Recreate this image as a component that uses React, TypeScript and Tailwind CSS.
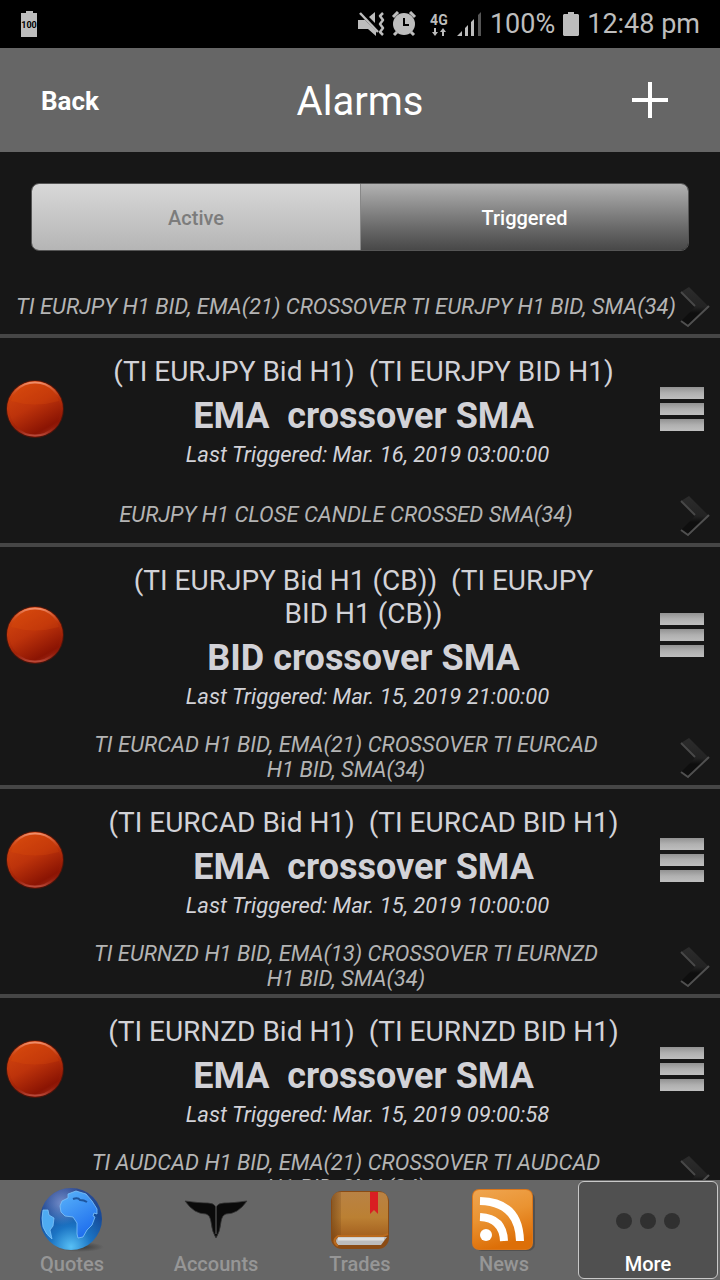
import type { ReactNode } from "react";

type Alarm = {
  id: number;
  terms?: string;
  rule?: string;
  date?: string;
  note: string;
};

const ALARMS: Alarm[] = [
  { id: 1, note: "TI EURJPY H1 BID, EMA(21) CROSSOVER TI EURJPY H1 BID, SMA(34)" },
  { id: 2, terms: "(TI EURJPY Bid H1)  (TI EURJPY BID H1)", rule: "EMA  crossover SMA", date: "Mar. 16, 2019 03:00:00", note: "EURJPY H1 CLOSE CANDLE CROSSED SMA(34)" },
  { id: 3, terms: "(TI EURJPY Bid H1 (CB))  (TI EURJPY\nBID H1 (CB))", rule: "BID crossover SMA", date: "Mar. 15, 2019 21:00:00", note: "TI EURCAD H1 BID, EMA(21) CROSSOVER TI EURCAD\nH1 BID, SMA(34)" },
  { id: 4, terms: "(TI EURCAD Bid H1)  (TI EURCAD BID H1)", rule: "EMA  crossover SMA", date: "Mar. 15, 2019 10:00:00", note: "TI EURNZD H1 BID, EMA(13) CROSSOVER TI EURNZD\nH1 BID, SMA(34)" },
  { id: 5, terms: "(TI EURNZD Bid H1)  (TI EURNZD BID H1)", rule: "EMA  crossover SMA", date: "Mar. 15, 2019 09:00:58", note: "TI AUDCAD H1 BID, EMA(21) CROSSOVER TI AUDCAD\nH1 BID, SMA(34)" },
];

function StatusBar() {
  return (
    <div className="h-12 shrink-0 bg-black text-[#bdbdbd] flex items-center justify-between px-5">
      <svg width="18" height="26" viewBox="0 0 18 26">
        <path d="M1 2h5V0h7v2h4v24H1z" fill="#bdbdbd" />
        <text x="9" y="17" textAnchor="middle" fontSize="9" fontWeight="700" fontFamily="Roboto, sans-serif" fill="#000">100</text>
      </svg>
      <div className="flex items-center">
        <svg width="60" height="26" viewBox="0 0 60 26" fill="#bdbdbd">
          <path d="M1 9h7l11 11v5l-8-7H1z" />
          <path d="M12 6l6-5v11z" />
          <path d="M3 2l18 19" stroke="#bdbdbd" strokeWidth="2.5" />
          <path d="M26 2l-3 3 3 4-3 4 3 4-3 4 3 3" fill="none" stroke="#bdbdbd" strokeWidth="2.5" strokeLinejoin="round" />
          <circle cx="47" cy="13" r="11" />
          <path d="M36 6l5-5M58 6l-5-5M40 21l-3 3M54 21l3 3" stroke="#bdbdbd" strokeWidth="3" />
          <path d="M47 7v7h5" fill="none" stroke="#000" strokeWidth="2" />
        </svg>
        <div className="w-5 ml-3 flex flex-col items-center">
          <span className="text-sm leading-4 font-bold">4G</span>
          <svg width="14" height="8" viewBox="0 0 14 8" fill="#bdbdbd">
            <path d="M2 0h2v4h2L3 8 0 4h2zM10 8h2V4h2l-3-4-3 4h2z" />
          </svg>
        </div>
        <svg className="ml-2" width="25" height="24" viewBox="0 0 25 24" fill="#bdbdbd">
          <path d="M0 24l5-5v5zM8 16l3-3v11H8zM14 10l3-3v17h-3z" />
          <path d="M21 3l3-3v24h-3z" fill="#555" />
        </svg>
        <span className="ml-2 text-[27px] leading-8">100%</span>
        <svg className="ml-2" width="16" height="24" viewBox="0 0 16 24" fill="#bdbdbd">
          <path d="M1 2h4V0h6v2h4l1 1v20l-1 1H1l-1-1V3z" />
        </svg>
        <span className="ml-2 text-[27px] leading-8">12:48 pm</span>
      </div>
    </div>
  );
}

function RedDot({ id }: { id: number }) {
  return (
    <svg className="shrink-0" width="60" height="60" viewBox="0 0 60 60" aria-hidden="true">
      <defs>
        <linearGradient id={`dot-${id}`} x1="0.2" y1="0" x2="0.75" y2="1">
          <stop offset="0" stopColor="#d4470e" />
          <stop offset="0.45" stopColor="#bd330b" />
          <stop offset="0.85" stopColor="#8b1403" />
          <stop offset="1" stopColor="#a02a18" />
        </linearGradient>
        <linearGradient id={`rim-${id}`} x1="0" y1="0" x2="0" y2="1">
          <stop offset="0" stopColor="#f08c68" />
          <stop offset="0.3" stopColor="#c8400f" stopOpacity="0.2" />
          <stop offset="0.8" stopColor="#8b1403" stopOpacity="0.2" />
          <stop offset="1" stopColor="#b84838" />
        </linearGradient>
      </defs>
      <circle cx="30" cy="30" r="29" fill="#5a1608" opacity="0.7" />
      <circle cx="30" cy="30" r="28" fill={`url(#dot-${id})`} />
      <path d="M6 22a25 25 0 0 1 48 0q-24 7-48 0z" fill="#e8530c" opacity="0.2" />
      <circle cx="30" cy="30" r="26.5" fill="none" stroke={`url(#rim-${id})`} strokeWidth="2" />
    </svg>
  );
}

function Chevron({ id }: { id: number }) {
  return (
    <svg className="shrink-0" width="32" height="42" viewBox="0 0 32 42" aria-hidden="true">
      <defs>
        <linearGradient id={`chev-${id}`} x1="0" y1="0" x2="0" y2="1">
          <stop offset="0" stopColor="#2c2c2c" />
          <stop offset="0.5" stopColor="#232323" />
          <stop offset="0.65" stopColor="#0e0e0e" />
          <stop offset="1" stopColor="#0e0e0e" />
        </linearGradient>
      </defs>
      <path d="M1 6L9 1l20 20L9 41l-8-6 14-14z" fill={`url(#chev-${id})`} />
      <path d="M1 6l14 14" stroke="#484848" strokeWidth="2" />
      <path d="M1 35l7 5 21-20" fill="none" stroke="#505050" strokeWidth="2" />
    </svg>
  );
}

function AlarmRow({ alarm }: { alarm: Alarm }) {
  return (
    <li className="border-b-4 border-[#464646]">
      {alarm.terms && (
        <div className="flex items-center justify-between pl-[5px] pr-4">
          <RedDot id={alarm.id} />
          <div className="flex-1 pt-[17px] pb-3 pl-[2px] text-center text-[#d2d2d7]">
            <p className="text-[28px] leading-[33px] whitespace-pre-wrap">{alarm.terms}</p>
            <h2 className="mt-2 text-[36px] leading-10 font-bold whitespace-pre-wrap">{alarm.rule}</h2>
            <p className="mt-[6px] pl-2 text-[22px] leading-[26px] italic">Last Triggered: {alarm.date}</p>
          </div>
          <button type="button" aria-label="Reorder" className="shrink-0 flex flex-col gap-1">
            <span className="block w-11 h-3 bg-linear-to-b from-[#929292] via-[#b0b0b0] to-[#bebebe]" />
            <span className="block w-11 h-3 bg-linear-to-b from-[#929292] via-[#b0b0b0] to-[#bebebe]" />
            <span className="block w-11 h-3 bg-linear-to-b from-[#929292] via-[#b0b0b0] to-[#bebebe]" />
          </button>
        </div>
      )}
      <button type="button" className={`w-full flex items-center pl-4 pr-2 ${alarm.terms ? "h-[63px] pt-2" : "h-[54px]"}`}>
        <span className="flex-1 pb-[2px] pr-[2px] -ml-[2px] text-center text-[22px] leading-[25px] italic text-[#b4b4b4] whitespace-pre-wrap">{alarm.note}</span>
        <Chevron id={alarm.id} />
      </button>
    </li>
  );
}

function GlobeIcon() {
  return (
    <svg width="64" height="64" viewBox="0 0 64 64">
      <defs>
        <radialGradient id="sea" cx="0.5" cy="0.95" r="0.95">
          <stop offset="0" stopColor="#58c0f5" />
          <stop offset="0.35" stopColor="#1b74c4" />
          <stop offset="0.7" stopColor="#164a98" />
          <stop offset="1" stopColor="#2d4a92" />
        </radialGradient>
        <radialGradient id="shine" cx="0.35" cy="0.25" r="0.35">
          <stop offset="0" stopColor="#9aa8dd" stopOpacity="0.7" />
          <stop offset="1" stopColor="#9aa8dd" stopOpacity="0" />
        </radialGradient>
        <linearGradient id="land" x1="0" y1="0" x2="0.5" y2="1">
          <stop offset="0" stopColor="#5ab4fa" />
          <stop offset="1" stopColor="#2070ee" />
        </linearGradient>
        <radialGradient id="shade">
          <stop offset="0" stopColor="#3a3a3a" />
          <stop offset="1" stopColor="#3a3a3a" stopOpacity="0" />
        </radialGradient>
      </defs>
      <ellipse cx="40" cy="59" rx="24" ry="5" fill="url(#shade)" />
      <circle cx="31" cy="31" r="31" fill="url(#sea)" />
      <circle cx="31" cy="31" r="31" fill="url(#shine)" />
      <path d="M28 6l8-3 10 3 6 7 5 8v5l-3-1-1 3 2 1-3 8-5 5-4 7-5 1-1-4V35l-4-6-8-1-4-4-1-6 2-5 6-3z" fill="url(#land)" stroke="#7fc4fa" strokeWidth="0.8" />
      <path d="M33 11q5-2 7 1 4 0 7 2" fill="none" stroke="#1d559e" strokeWidth="2" />
      <path d="M3 22l5 0 1 5 5 3-1 8-3 4 2 9q-6-4-9-12-2-9 0-17z" fill="#4eabf2" stroke="#7fc4fa" strokeWidth="0.8" />
    </svg>
  );
}

function WingsIcon() {
  return (
    <svg width="64" height="64" viewBox="0 0 64 64">
      <path d="M1 13q14 2 23 2 6 0 8 4 2-4 8-4 9 0 23-2-4 6-10 10-5 3-11 3-4 1-5 8-1 10-5 16-4-6-5-16-1-7-5-8-6 0-11-3-6-4-10-10z" fill="#0a0a0a" stroke="#333" strokeWidth="0.8" />
      <path d="M32 18v28" stroke="#484848" strokeWidth="1.5" />
    </svg>
  );
}

function BookIcon() {
  return (
    <svg width="64" height="64" viewBox="0 0 64 64">
      <defs>
        <linearGradient id="cover" x1="0" y1="0" x2="0" y2="1">
          <stop offset="0" stopColor="#b98244" />
          <stop offset="0.5" stopColor="#bb8033" />
          <stop offset="1" stopColor="#9c5518" />
        </linearGradient>
        <linearGradient id="spine" x1="0" y1="0" x2="1" y2="0">
          <stop offset="0" stopColor="#6b3d12" stopOpacity="0.6" />
          <stop offset="1" stopColor="#6b3d12" stopOpacity="0.2" />
        </linearGradient>
      </defs>
      <rect x="3" y="3" width="58" height="58" rx="11" fill="#8a4b14" />
      <path d="M4 51V13q0-9 9-9h38q9 0 9 9v33l-4 3H10q-5 1-6 6z" fill="url(#cover)" />
      <path d="M4 13q0-9 9-9v44q-8 0-9 8z" fill="url(#spine)" />
      <path d="M10 49h49l-6 8H10q-4-4 0-8z" fill="#bcbcbc" />
      <path d="M10 51h46" stroke="#dedede" strokeWidth="3" />
      <path d="M10 58q-7-5 0-10h45l5-2" fill="none" stroke="#b96a1e" strokeWidth="2" />
      <path d="M42 4h8v22l-4-4-4 4z" fill="#d91f22" />
    </svg>
  );
}

function FeedIcon() {
  return (
    <svg width="64" height="64" viewBox="0 0 64 64">
      <defs>
        <linearGradient id="feed" x1="0" y1="0" x2="0.3" y2="1">
          <stop offset="0" stopColor="#efa550" />
          <stop offset="0.5" stopColor="#ea9331" />
          <stop offset="1" stopColor="#dd6f08" />
        </linearGradient>
      </defs>
      <rect x="3" y="4" width="60" height="59" rx="7" fill="#4c4c4c" opacity="0.8" />
      <rect x="0" y="1" width="61" height="61" rx="7" fill="#d9761b" />
      <rect x="1" y="2" width="59" height="59" rx="6" fill="url(#feed)" />
      <circle cx="14" cy="47" r="6" fill="#fff" />
      <path d="M8 29q23 1 24 24M8 13q39 1 40 40" fill="none" stroke="#fff" strokeWidth="8" />
    </svg>
  );
}

function DotsIcon() {
  return (
    <svg width="64" height="64" viewBox="0 0 64 64" fill="#303030">
      <circle cx="8" cy="33" r="8" />
      <circle cx="32" cy="33" r="8" />
      <circle cx="56" cy="33" r="8" />
    </svg>
  );
}

function NavItem({ label, active, children }: { label: string; active?: boolean; children: ReactNode }) {
  return (
    <a
      href="#"
      aria-current={active ? "page" : undefined}
      className={`h-[98px] mx-[2px] mt-px flex flex-col items-center rounded-md border text-[20px] leading-6 font-medium pt-[6px] ${active ? "border-[#c8c8c8] bg-[#505050] text-white" : "border-transparent text-[#969696]"}`}
    >
      {children}
      {label}
    </a>
  );
}

export default function App() {
  return (
    <div className="h-screen flex flex-col bg-[#171717] font-[Roboto,sans-serif]">
      <StatusBar />
      <header className="h-[104px] shrink-0 bg-[#666] text-white grid grid-cols-3 items-center px-[41px]">
        <button type="button" className="justify-self-start pt-[2px] text-[26px] leading-8 font-bold">Back</button>
        <h1 className="text-center pt-1 text-[40px] leading-[48px]">Alarms</h1>
        <button type="button" aria-label="Add alarm" className="justify-self-end pr-[10px]">
          <svg width="38" height="38" viewBox="0 0 38 38" stroke="#fff" strokeWidth="4">
            <path d="M1 19h36M19 1v36" />
          </svg>
        </button>
      </header>
      <div className="shrink-0 px-[31px] pt-[31px] pb-[29px]">
        <div role="tablist" className="h-[68px] grid grid-cols-2 rounded-lg border border-[#555] overflow-hidden text-[20px] font-medium">
          <button type="button" role="tab" aria-selected="false" className="pt-[2px] bg-linear-to-b from-[#d8d8d8] to-[#b5b5b5] text-[#7c7c7c]">Active</button>
          <button type="button" role="tab" aria-selected="true" className="pt-[2px] border-l border-[#888] bg-linear-to-b from-[#b2b2b2] to-[#484848] text-white">Triggered</button>
        </div>
      </div>
      <ul className="flex-1 min-h-0 overflow-hidden">
        {ALARMS.map(a => <AlarmRow key={a.id} alarm={a} />)}
      </ul>
      <nav className="h-[100px] shrink-0 bg-[#666] grid grid-cols-5">
        <NavItem label="Quotes"><GlobeIcon /></NavItem>
        <NavItem label="Accounts"><WingsIcon /></NavItem>
        <NavItem label="Trades"><BookIcon /></NavItem>
        <NavItem label="News"><FeedIcon /></NavItem>
        <NavItem label="More" active><DotsIcon /></NavItem>
      </nav>
    </div>
  );
}
